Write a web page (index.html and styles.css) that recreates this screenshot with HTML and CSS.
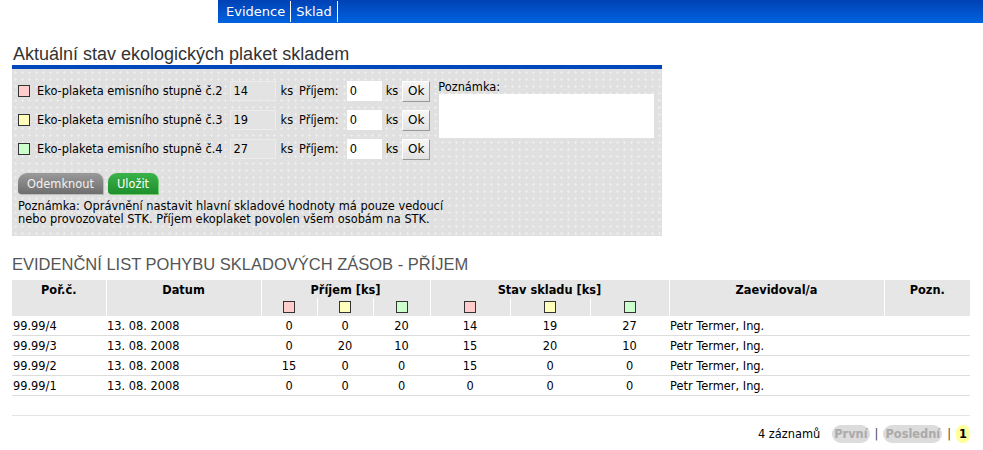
FILE: index.html
```html
<!DOCTYPE html>
<html lang="cs">
<head>
    <meta charset="UTF-8">
    <title>Sklad - ekologické plakety</title>
    <link rel="stylesheet" href="styles.css">
</head>
<body>

    <div class="topbar">
        <a class="menu-item" href="#">Evidence</a>
        <a class="menu-item" href="#">Sklad</a>
    </div>

    <div class="page">
        <h2 class="title">Aktuální stav ekologických plaket skladem</h2>

        <div class="panel">
            <div class="form-area">
                <div class="rows">
                    <div class="row">
                        <span class="sq red"></span>
                        <span class="label">Eko-plaketa emisního stupně č.2</span>
                        <input class="stock" type="text" value="14" readonly>
                        <span class="unit">ks</span>
                        <span class="label">Příjem:</span>
                        <input class="income" type="text" value="0">
                        <span class="unit">ks</span>
                        <button class="ok">Ok</button>
                    </div>
                    <div class="row">
                        <span class="sq yellow"></span>
                        <span class="label">Eko-plaketa emisního stupně č.3</span>
                        <input class="stock" type="text" value="19" readonly>
                        <span class="unit">ks</span>
                        <span class="label">Příjem:</span>
                        <input class="income" type="text" value="0">
                        <span class="unit">ks</span>
                        <button class="ok">Ok</button>
                    </div>
                    <div class="row">
                        <span class="sq green"></span>
                        <span class="label">Eko-plaketa emisního stupně č.4</span>
                        <input class="stock" type="text" value="27" readonly>
                        <span class="unit">ks</span>
                        <span class="label">Příjem:</span>
                        <input class="income" type="text" value="0">
                        <span class="unit">ks</span>
                        <button class="ok">Ok</button>
                    </div>
                </div>
                <div class="note-box">
                    <div class="note-label">Poznámka:</div>
                    <textarea class="note-text"></textarea>
                </div>
            </div>

            <div class="actions">
                <button class="tab-btn grey">Odemknout</button>
                <button class="tab-btn green">Uložit</button>
            </div>

            <p class="hint">Poznámka: Oprávnění nastavit hlavní skladové hodnoty má pouze vedoucí<br>nebo provozovatel STK. Příjem ekoplaket povolen všem osobám na STK.</p>
        </div>

        <h2 class="title upper">EVIDENČNÍ LIST POHYBU SKLADOVÝCH ZÁSOB - PŘÍJEM</h2>

        <table class="list">
            <colgroup>
                <col class="c-num"><col class="c-date">
                <col class="c-in"><col class="c-in"><col class="c-in3">
                <col class="c-st"><col class="c-st"><col class="c-st3">
                <col class="c-user"><col class="c-note">
            </colgroup>
            <thead>
                <tr>
                    <th rowspan="2">Poř.č.</th>
                    <th rowspan="2">Datum</th>
                    <th colspan="3">Příjem [ks]</th>
                    <th colspan="3">Stav skladu [ks]</th>
                    <th rowspan="2">Zaevidoval/a</th>
                    <th rowspan="2">Pozn.</th>
                </tr>
                <tr class="squares">
                    <th><span class="sq red"></span></th>
                    <th><span class="sq yellow"></span></th>
                    <th><span class="sq green"></span></th>
                    <th><span class="sq red"></span></th>
                    <th><span class="sq yellow"></span></th>
                    <th><span class="sq green"></span></th>
                </tr>
            </thead>
            <tbody>
                <tr>
                    <td>99.99/4</td><td>13. 08. 2008</td>
                    <td class="num">0</td><td class="num">0</td><td class="num">20</td>
                    <td class="num">14</td><td class="num">19</td><td class="num">27</td>
                    <td>Petr Termer, Ing.</td><td></td>
                </tr>
                <tr>
                    <td>99.99/3</td><td>13. 08. 2008</td>
                    <td class="num">0</td><td class="num">20</td><td class="num">10</td>
                    <td class="num">15</td><td class="num">20</td><td class="num">10</td>
                    <td>Petr Termer, Ing.</td><td></td>
                </tr>
                <tr>
                    <td>99.99/2</td><td>13. 08. 2008</td>
                    <td class="num">15</td><td class="num">0</td><td class="num">0</td>
                    <td class="num">15</td><td class="num">0</td><td class="num">0</td>
                    <td>Petr Termer, Ing.</td><td></td>
                </tr>
                <tr>
                    <td>99.99/1</td><td>13. 08. 2008</td>
                    <td class="num">0</td><td class="num">0</td><td class="num">0</td>
                    <td class="num">0</td><td class="num">0</td><td class="num">0</td>
                    <td>Petr Termer, Ing.</td><td></td>
                </tr>
            </tbody>
        </table>

        <div class="pager">
            <span class="count">4 záznamů</span>
            <span class="pill">První</span>
            <span class="sep">|</span>
            <span class="pill">Poslední</span>
            <span class="sep">|</span>
            <span class="current">1</span>
        </div>
    </div>

</body>
</html>
```

FILE: styles.css
```css
body {
    margin: 0;
    font-family: "DejaVu Sans", Verdana, sans-serif;
    font-size: 11.4px;
    color: #000;
    background: #fff;
}
.topbar {
    margin-left: 218px;
    height: 23px;
    display: flex;
    align-items: stretch;
    background: linear-gradient(#0042b4, #0062e0);
}
.menu-item {
    color: #fff;
    text-decoration: none;
    font-size: 13px;
    padding: 0 5px 0 8px;
    border-right: 1px solid #fff;
    margin: 1px 0;
    line-height: 21px;
}
.menu-item + .menu-item {
    padding-left: 5px;
}
.page {
    padding: 0 13px 0 12px;
}
.title {
    font-family: "Liberation Sans", Arial, sans-serif;
    font-weight: normal;
    font-size: 18px;
    color: #333;
    margin: 21px 0 0 1px;
    line-height: 21px;
}
.title.upper {
    font-size: 16.5px;
    color: #555;
    margin: 18px 0 5px 0;
}
.panel {
    width: 650px;
    box-sizing: border-box;
    border-top: 4px solid #0047bb;
    background-color: #e0e0e0;
    background-image: radial-gradient(circle, #ededed 1px, transparent 1.2px);
    background-size: 7px 7px;
    padding: 12px 6px 10px 6px;
}
.form-area {
    display: flex;
    gap: 8px;
}
.rows {
    display: flex;
    flex-direction: column;
    gap: 9px;
}
.row {
    display: flex;
    align-items: center;
    height: 20px;
}
.sq {
    display: inline-block;
    width: 10px;
    height: 10px;
    border: 1px solid #333;
}
.sq.red { background: #ffcccc; }
.sq.yellow { background: #ffffbb; }
.sq.green { background: #ccffcc; }
.row .sq {
    margin-right: 7px;
}
.label {
    white-space: nowrap;
}
.stock, .income {
    font-family: "DejaVu Sans", Verdana, sans-serif;
    font-size: 11.4px;
    height: 20px;
    box-sizing: border-box;
    padding: 2px 3px;
    outline: none;
}
.stock {
    width: 46px;
    margin-left: 7px;
    background: #e3e3e3;
    border: 1px solid #ececec;
}
.income {
    width: 35px;
    margin-left: 8px;
    background: #fff;
    border: none;
}
.unit {
    margin: 0 6px 0 5px;
}
.income + .unit {
    margin: 0 4px 0 4px;
}
.ok {
    width: 28px;
    height: 21px;
    padding: 0;
    font-family: "DejaVu Sans", Verdana, sans-serif;
    font-size: 12px;
    background: linear-gradient(#f6f6f6, #e2e2e2);
    border: 1px solid #fff;
    border-right-color: #999;
    border-bottom-color: #999;
}
.note-box {
    display: flex;
    flex-direction: column;
}
.note-label {
    line-height: 13px;
}
.note-text {
    width: 215px;
    height: 44px;
    box-sizing: border-box;
    margin: 0 0 0 1px;
    border: none;
    background: #fff;
    resize: none;
}
.actions {
    display: flex;
    gap: 5px;
    margin-top: 14px;
}
.tab-btn {
    font-family: "DejaVu Sans", Verdana, sans-serif;
    font-size: 11.4px;
    height: 21px;
    padding: 0;
    border: none;
    color: #fff;
    border-radius: 9px 7px 0 3px;
}
.tab-btn.grey {
    width: 85px;
    background: linear-gradient(#9a9a9a, #6e6e6e);
    box-shadow: 1px 1px 0 #bbb;
    color: #f2f2f2;
}
.tab-btn.green {
    width: 50px;
    background: linear-gradient(#3bb24a, #1f8f2c);
    box-shadow: 1px 1px 0 #7c7;
}
.hint {
    margin: 6px 0 0 0;
    line-height: 13px;
}
.list {
    width: 958px;
    border-collapse: collapse;
    table-layout: fixed;
}
.c-num { width: 94px; }
.c-date { width: 155px; }
.c-in { width: 56px; }
.c-in3 { width: 57px; }
.c-st { width: 80px; }
.c-st3 { width: 79px; }
.c-user { width: 215px; }
.c-note { width: 86px; }
.list th {
    background: #e6e6e6;
    font-weight: bold;
    text-align: center;
    vertical-align: top;
    border-left: 1px solid #fff;
    padding: 4px 0 0 0;
    height: 14px;
    line-height: 13px;
}
.list th:first-child {
    border-left: none;
}
.list .squares th {
    height: 15px;
    padding: 3px 0 0 0;
}
.list .squares th:first-child {
    border-left: 1px solid #fff;
}
.list td {
    height: 19px;
    padding: 0 1px;
    border-bottom: 1px solid #ddd;
    white-space: nowrap;
}
.list td.num {
    text-align: center;
}
.pager {
    margin-top: 19px;
    border-top: 1px solid #e4e4e4;
    width: 958px;
    padding-top: 9px;
    display: flex;
    justify-content: flex-end;
    align-items: center;
    gap: 5px;
}
.count {
    margin-right: 7px;
}
.pill {
    background: #dcdcdc;
    color: #aaa;
    font-weight: bold;
    padding: 2px 2px;
    border-radius: 9px;
}
.sep {
    color: #444;
}
.current {
    background: #ffff99;
    font-weight: bold;
    padding: 2px 3px;
    border-radius: 9px;
}
```
